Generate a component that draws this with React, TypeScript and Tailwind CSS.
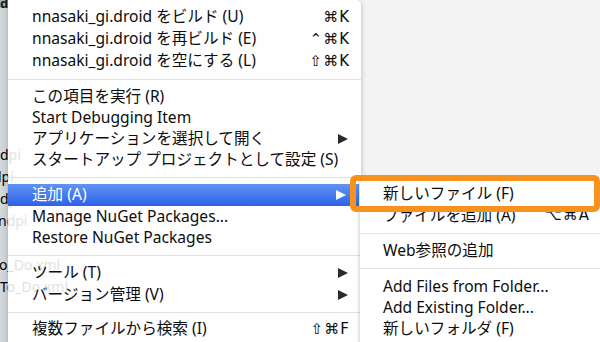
import React from "react"

const font = { fontFamily: '"Noto Sans", "Noto Sans CJK JP", sans-serif' }

function Arrow({ white }: { white?: boolean }) {
  return (
    <svg width="10" height="10" viewBox="0 0 10 10" className="mr-[2px]">
      <polygon points="0,0 10,5 0,10" fill={white ? "#ffffff" : "#2a2a2a"} />
    </svg>
  )
}

interface ItemProps {
  label: string
  shortcut?: string
  arrow?: boolean
  active?: boolean
  tall?: boolean
  sub?: boolean
}

function Item({ label, shortcut, arrow, active, tall, sub }: ItemProps) {
  return (
    <div
      className={`${tall ? "h-[22px]" : "h-[21px]"} ${sub ? "pl-[23px]" : "pl-[24px]"} ${
        active ? "mr-[2px] bg-gradient-to-b from-[#6193f4] to-[#2c62e7] text-white" : "text-[#0d0d0d]"
      } pr-[11px] flex items-center justify-between text-[15.6px] leading-none whitespace-nowrap`}
    >
      <span>{label}</span>
      {shortcut && (
        <span className="text-[15px] tracking-[1px]" style={{ fontFamily: '"DejaVu Sans", sans-serif' }}>
          {shortcut}
        </span>
      )}
      {arrow && <Arrow white={active} />}
    </div>
  )
}

function Sep({ h }: { h: "12" | "14" | "15" }) {
  const cls = h === "12" ? "h-[12px]" : h === "14" ? "h-[14px]" : "h-[15px]"
  return (
    <div className={`${cls} flex items-center`}>
      <div className="h-px w-full bg-[#e2e2e2]" />
    </div>
  )
}

const files = [
  { t: "dpi", cls: "ml-0" },
  { t: "dpi", cls: "-ml-[7px]" },
  { t: "dpi", cls: "ml-0" },
  { t: "ndpi", cls: "-ml-[2px]" },
  { t: "", cls: "ml-0" },
  { t: "o_Do.xml", cls: "-ml-[1px]" },
  { t: "To_Do.xml", cls: "ml-0" },
]

export default function App() {
  return (
    <div className="relative w-[600px] h-[342px] overflow-hidden bg-[#f3f3f3]" style={font}>
      {/* window behind the menu */}
      <div className="flex h-full">
        <div className="w-[90px] h-full flex flex-col bg-[linear-gradient(to_right,#d6dadd,#c3c9cd_8px,transparent_8px)]">
          <div className="h-[11px] bg-[linear-gradient(to_right,#9eafb9_8px,transparent_8px)] text-[13px] font-bold leading-none text-[#1a1a1a] -mt-[3px] pt-0">
            d
          </div>
          <div className="h-[135px]" />
          {files.map((f, i) => (
            <div key={i} className={`h-[22px] flex items-center text-[14px] text-black whitespace-nowrap ${f.cls}`}>
              {f.t}
            </div>
          ))}
        </div>
        <div className="flex-1" />
      </div>

      {/* main context menu */}
      <div className="absolute left-[8px] top-0 w-[353px] h-[360px] bg-white/[0.88] rounded-tr-[5px] shadow-[1px_1px_4px_rgba(0,0,0,0.18)] pt-[6px] flex flex-col">
        <Item tall label="nnasaki_gi.droid をビルド (U)" shortcut="⌘K" />
        <Item tall label="nnasaki_gi.droid を再ビルド (E)" shortcut="⌃⌘K" />
        <Item tall label="nnasaki_gi.droid を空にする (L)" shortcut="⇧⌘K" />
        <Sep h="14" />
        <Item label="この項目を実行 (R)" />
        <Item label="Start Debugging Item" />
        <Item label="アプリケーションを選択して開く" arrow />
        <Item label="スタートアップ プロジェクトとして設定 (S)" />
        <Sep h="14" />
        <Item tall active label="追加 (A)" arrow />
        <Item label="Manage NuGet Packages..." />
        <Item label="Restore NuGet Packages" />
        <Sep h="14" />
        <Item tall label="ツール (T)" arrow />
        <Item tall label="バージョン管理 (V)" arrow />
        <Sep h="12" />
        <Item tall label="複数ファイルから検索 (I)" shortcut="⇧⌘F" />
      </div>

      {/* submenu */}
      <div className="absolute left-[360px] top-[178px] w-[241px] h-[180px] bg-white shadow-[-1px_1px_3px_rgba(0,0,0,0.18)] pt-[5px] flex flex-col">
        <Item sub tall label="新しいファイル (F)" />
        <Item sub label="ファイルを追加 (A)" shortcut="⌥⌘A" />
        <Sep h="14" />
        <Item sub label="Web参照の追加" />
        <Sep h="15" />
        <Item sub label="Add Files from Folder..." />
        <Item sub label="Add Existing Folder..." />
        <Item sub tall label="新しいフォルダ (F)" />
      </div>

      {/* orange callout */}
      <div className="absolute left-[350px] top-[175px] w-[250px] h-[37px] border-[6px] border-[#f7921e] rounded-[6px]" />
    </div>
  )
}
